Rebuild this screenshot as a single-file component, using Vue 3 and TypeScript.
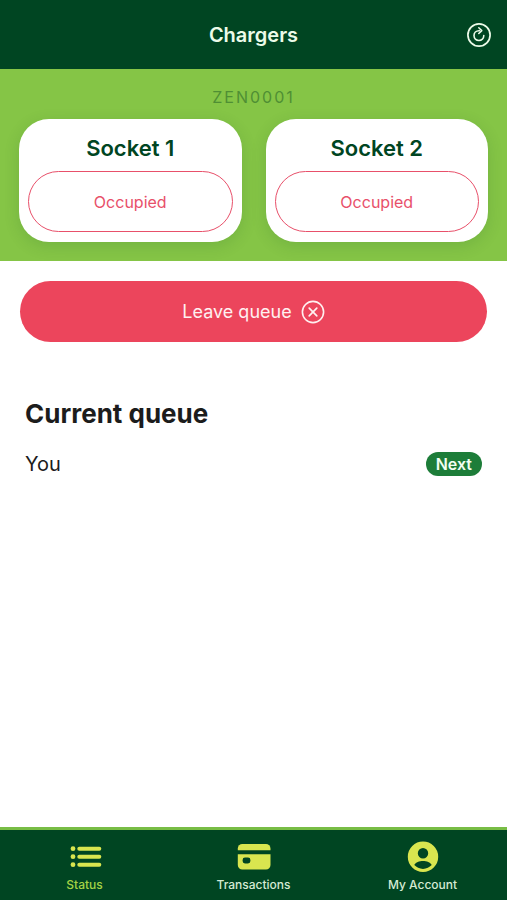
<script setup lang="ts">
import { ref } from 'vue'

interface Socket {
  id: number
  name: string
  status: string
}

interface QueueEntry {
  name: string
  badge: string
}

type TabId = 'status' | 'transactions' | 'account'

const chargerCode = 'ZEN0001'
const sockets: Socket[] = [
  { id: 1, name: 'Socket 1', status: 'Occupied' },
  { id: 2, name: 'Socket 2', status: 'Occupied' },
]
const queue: QueueEntry[] = [{ name: 'You', badge: 'Next' }]
const tabs: { id: TabId; label: string }[] = [
  { id: 'status', label: 'Status' },
  { id: 'transactions', label: 'Transactions' },
  { id: 'account', label: 'My Account' },
]
const activeTab = ref<TabId>('status')
</script>

<template>
  <div class="screen">
    <header class="topbar">
      <h1 class="title">Chargers</h1>
      <button class="refresh" type="button" aria-label="Refresh">
        <svg viewBox="0 0 24 24" width="24" height="24" fill="none" stroke="currentColor">
          <circle cx="12" cy="12" r="11.1" stroke-width="1.7" />
          <path d="M12.600 7.700h-.7a4.900 4.900 0 1 0 4.900 4.900" stroke-width="1.6" stroke-linecap="round" />
          <path d="m11.800 4.700 3 2.900-3 2.900" stroke-width="1.500" stroke-linecap="round" stroke-linejoin="round" />
        </svg>
      </button>
    </header>

    <section class="charger">
      <p class="code">{{ chargerCode }}</p>
      <div class="sockets">
        <article v-for="socket in sockets" :key="socket.id" class="card">
          <h2 class="socket-name">{{ socket.name }}</h2>
          <button class="socket-status" type="button">{{ socket.status }}</button>
        </article>
      </div>
    </section>

    <main class="content">
      <button class="leave" type="button">
        <span>Leave queue</span>
        <svg viewBox="0 0 24 24" width="24" height="24" fill="none" stroke="currentColor" stroke-linecap="round" aria-hidden="true">
          <circle cx="12" cy="12" r="10.6" stroke-width="1.6" />
          <path d="m8.2 8.2 7.6 7.6m0-7.6-7.6 7.6" stroke-width="1.7" />
        </svg>
      </button>

      <section class="queue">
        <h2 class="queue-title">Current queue</h2>
        <ul class="queue-list">
          <li v-for="entry in queue" :key="entry.name" class="queue-row">
            <span>{{ entry.name }}</span>
            <span class="badge">{{ entry.badge }}</span>
          </li>
        </ul>
      </section>
    </main>

    <nav class="tabs">
      <button
        v-for="tab in tabs"
        :key="tab.id"
        type="button"
        class="tab"
        :class="{ active: tab.id === activeTab }"
        @click="activeTab = tab.id"
      >
        <svg v-if="tab.id === 'status'" class="tab-icon" viewBox="0 0 34 32" width="34" height="32" aria-hidden="true">
          <g fill="currentColor">
            <circle cx="5" cy="7.7" r="2.4" />
            <circle cx="5" cy="15.700" r="2.4" />
            <circle cx="5" cy="23.700" r="2.4" />
            <rect x="9.300" y="5.700" width="24" height="4" rx="2" />
            <rect x="9.300" y="13.700" width="24" height="4" rx="2" />
            <rect x="9.300" y="21.700" width="24" height="4" rx="2" />
          </g>
        </svg>
        <svg v-else-if="tab.id === 'transactions'" class="tab-icon" viewBox="0 0 34 32" width="34" height="32" aria-hidden="true">
          <path fill="currentColor" d="M.8 9.200V7.500A4.500 4.500 0 0 1 5.300 3h23.700A4.500 4.500 0 0 1 33.500 7.500v1.700z" />
          <path fill="currentColor" fill-rule="evenodd" d="M.8 13.200h32.700V24a4.500 4.500 0 0 1-4.500 4.500H5.300A4.500 4.500 0 0 1 .8 24zM8 16.500a2.400 2.400 0 0 0-2.400 2.400v1.200A2.400 2.400 0 0 0 8 22.500h3a2.400 2.400 0 0 0 2.400-2.400v-1.200a2.400 2.400 0 0 0-2.400-2.400z" />
        </svg>
        <svg v-else class="tab-icon" viewBox="0 0 34 32" width="34" height="32" aria-hidden="true">
          <path
            fill="currentColor"
            fill-rule="evenodd"
            d="M17 .5a15.200 15.200 0 1 0 0 30.400 15.200 15.200 0 0 0 0-30.400zM17 7a5.200 5.200 0 1 1 0 10.400 5.200 5.200 0 0 1 0-10.400zM8.300 24.100c1.400-2.900 5-4 8.700-4s7.300 1.100 8.700 4c-2.300 2.400-5.200 3.800-8.700 3.800s-6.400-1.400-8.700-3.800z"
          />
        </svg>
        <span class="tab-label">{{ tab.label }}</span>
      </button>
    </nav>
  </div>
</template>

<style>
body {
  margin: 0;
  background: #ffffff;
}
</style>

<style scoped>
.screen {
  display: flex;
  flex-direction: column;
  min-height: 100vh;
  font-family: Inter, "Liberation Sans", sans-serif;
  color: #1c1c1c;
}

h1,
h2,
p,
ul {
  margin: 0;
  padding: 0;
}

button {
  margin: 0;
  padding: 0;
  border: 0;
  background: none;
  font: inherit;
  color: inherit;
  cursor: pointer;
}

svg {
  display: block;
}

.topbar {
  display: grid;
  grid-template-columns: 1fr auto 1fr;
  align-items: center;
  padding: 20px 16px 19px;
  background: #004522;
  color: #ecfbe9;
}

.title {
  grid-column: 2;
  font-size: 20px;
  line-height: 30px;
  font-weight: 600;
}

.refresh {
  justify-self: end;
}

.charger {
  padding: 16px 19px 19px;
  background: #85c546;
}

.code {
  margin-bottom: 10px;
  font-size: 16px;
  line-height: 24px;
  letter-spacing: 2px;
  text-align: center;
  color: #4f8f34;
}

.sockets {
  display: grid;
  grid-template-columns: 1fr 1fr;
  gap: 24px;
}

.card {
  display: flex;
  flex-direction: column;
  gap: 8px;
  padding: 14px 9px 10px;
  border-radius: 30px;
  background: #ffffff;
  box-shadow: 0 4px 16px rgba(0, 69, 34, 0.14);
}

.socket-name {
  font-size: 22px;
  line-height: 30px;
  font-weight: 600;
  text-align: center;
  color: #004522;
}

.socket-status {
  height: 61px;
  border: 1px solid #e8506a;
  border-radius: 31px;
  font-size: 16px;
  color: #e8506a;
}

.content {
  flex: 1;
  padding: 20px;
}

.leave {
  display: flex;
  align-items: center;
  justify-content: center;
  gap: 9px;
  width: 100%;
  height: 61px;
  border-radius: 31px;
  background: #ec455c;
  font-size: 18px;
  color: #fff0f0;
}

.queue {
  padding: 54px 5px 0;
}

.queue-title {
  font-size: 26px;
  line-height: 36px;
  font-weight: 700;
}

.queue-list {
  margin-top: 16px;
  list-style: none;
}

.queue-row {
  display: flex;
  align-items: center;
  justify-content: space-between;
  font-size: 20px;
  line-height: 32px;
}

.badge {
  padding: 0 10px;
  border-radius: 12px;
  background: #1d7d39;
  font-size: 16px;
  line-height: 24px;
  font-weight: 600;
  color: #f2fff2;
}

.tabs {
  display: grid;
  grid-template-columns: repeat(3, 1fr);
  border-top: 3px solid #78bd45;
  background: #004522;
}

.tab {
  display: flex;
  flex-direction: column;
  align-items: center;
  gap: 4px;
  padding: 11px 0 7px;
  color: #d9e54f;
}

.tab-label {
  font-size: 12px;
  line-height: 16px;
  font-weight: 500;
  color: #d5ead3;
}

.active .tab-label {
  color: #a5d345;
}
</style>
